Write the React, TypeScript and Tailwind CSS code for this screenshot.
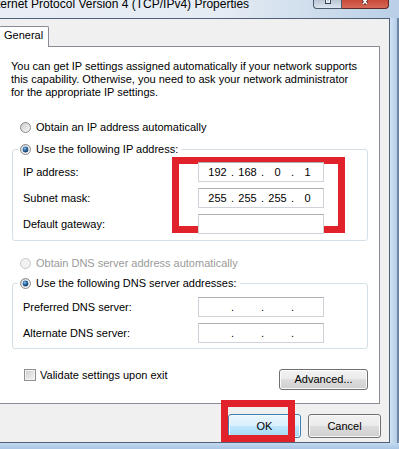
import React from "react";

function Radio({ checked = false, disabled = false }: { checked?: boolean; disabled?: boolean }) {
  return (
    <svg width="11" height="11" viewBox="0 0 11 11" className="block shrink-0">
      <defs>
        <linearGradient id="rbg" x1="0" y1="0" x2="1" y2="1">
          <stop offset="0" stopColor="#c9c9c9" />
          <stop offset="1" stopColor="#fbfbfb" />
        </linearGradient>
        <radialGradient id="rdot" cx="0.4" cy="0.35" r="0.75">
          <stop offset="0" stopColor="#8cc4ec" />
          <stop offset="0.45" stopColor="#2a66a0" />
          <stop offset="1" stopColor="#0f2f55" />
        </radialGradient>
      </defs>
      <circle
        cx="5.5"
        cy="5.5"
        r="5"
        fill={disabled ? "#f2f2f2" : "url(#rbg)"}
        stroke={disabled ? "#c6c6c6" : "#8a8a8a"}
      />
      {checked && <circle cx="5.5" cy="5.5" r="3.6" fill="#ffffff" />}
      {checked && <circle cx="5.5" cy="5.5" r="2.9" fill="url(#rdot)" />}
    </svg>
  );
}

function IpInput({ parts, blank = false }: { parts?: string[]; blank?: boolean }) {
  const p = parts ?? ["", "", "", ""];
  return (
    <div className="relative z-20 flex h-[20px] w-[126px] items-center border border-[#cfd2d8] border-t-[#abadb3] bg-white pl-[5px]">
      {!blank &&
        p.map((v, i) => (
          <React.Fragment key={i}>
            {i > 0 && <span className="w-[3px] text-center">.</span>}
            <span className="w-[27px] text-center">{v}</span>
          </React.Fragment>
        ))}
    </div>
  );
}

function Row({ label, parts, blank }: { label: string; parts?: string[]; blank?: boolean }) {
  return (
    <div className="flex h-[20px] items-center">
      <div className="w-[185px] whitespace-nowrap pl-[10px]">{label}</div>
      <IpInput parts={parts} blank={blank} />
    </div>
  );
}

function WinButton({ children, primary = false, className = "" }: { children: React.ReactNode; primary?: boolean; className?: string }) {
  const look = primary
    ? "border-[#3c7fb1] bg-[linear-gradient(#eaf6fd_0%,#d9f0fc_49%,#bee6fd_50%,#a7d9f5_100%)] shadow-[inset_0_0_0_1px_#f6fbfe]"
    : "border-[#707070] bg-[linear-gradient(#f2f2f2_0%,#ebebeb_49%,#dddddd_50%,#cfcfcf_100%)] shadow-[inset_0_0_0_1px_#fbfbfb]";
  return (
    <div className={`flex items-center justify-center rounded-[3px] border ${look} ${className}`}>
      {children}
    </div>
  );
}

export default function App() {
  return (
    <div className="relative flex h-[449px] w-[399px] flex-col overflow-hidden bg-[#bcd4ee] font-['Liberation_Sans',Arial,sans-serif] text-[11px] leading-[13px] text-black">
      {/* title bar */}
      <div className="flex h-[18px] shrink-0 items-start bg-[linear-gradient(90deg,#e9eef5_0%,#e5ecf4_55%,#cddcec_80%,#b9cfe7_100%)]">
        <div className="-ml-[3px] -mt-[3px] whitespace-nowrap text-[12px] leading-[15px]">
          ternet Protocol Version 4 (TCP/IPv4) Properties
        </div>
        <div className="ml-auto mr-[10px] flex h-[9px]">
          <div className="flex w-[29px] justify-center rounded-bl-[4px] border border-t-0 border-[#4b586a] bg-[linear-gradient(#b9c6d5,#dde5ee)]">
            <svg width="8" height="5" viewBox="0 0 8 5" className="ml-[1px]">
              <rect x="1.5" y="-2" width="5" height="5.5" fill="none" stroke="#3b4654" strokeWidth="1" />
              <rect x="2.5" y="-2" width="3" height="4" fill="none" stroke="#ffffff" strokeWidth="1" />
            </svg>
          </div>
          <div className="flex w-[47px] justify-center rounded-br-[4px] border border-l-0 border-t-0 border-[#5a2b26] bg-[linear-gradient(#c9493a,#d66a58)]">
            <svg width="10" height="5" viewBox="0 0 10 5">
              <path d="M1 -3 L7 4 M9 -3 L3 4" stroke="#4a1a14" strokeWidth="3" />
              <path d="M1 -3 L7 4 M9 -3 L3 4" stroke="#ffffff" strokeWidth="1.6" />
            </svg>
          </div>
        </div>
      </div>

      {/* client row */}
      <div className="flex h-[425px] shrink-0">
        <div className="flex h-full w-[390px] flex-col border-b border-r border-t border-[#4f6178] bg-[#f0f0f0] pt-[7px]">
          <div className="-ml-px flex flex-col">
            <div className="relative z-10 -mb-px h-[21px] w-[50px] rounded-t-[2px] border border-b-0 border-[#898c95] bg-white pl-[4px] pt-[2px]">
              General
            </div>
            <div className="flex h-[358px] w-[381px] flex-col border border-[#898c95] bg-white">
              <p className="ml-[11px] mt-[13px] whitespace-nowrap">
                You can get IP settings assigned automatically if your network supports
                <br />
                this capability. Otherwise, you need to ask your network administrator
                <br />
                for the appropriate IP settings.
              </p>

              <div className="ml-[20px] mt-[22px] flex h-[13px] items-center gap-[5px] whitespace-nowrap">
                <Radio />
                <span>Obtain an IP address automatically</span>
              </div>

              <fieldset className="ml-[12px] mt-[9px] w-[356px] rounded-[3px] border border-[#d5dfe5] pb-[6px] pt-[6px]">
                <legend className="ml-[5px] px-[2px]">
                  <span className="flex h-[13px] items-center gap-[5px] whitespace-nowrap">
                    <Radio checked />
                    <span className="pr-[1px]">Use the following IP address:</span>
                  </span>
                </legend>
                <div className="flex flex-col gap-[6px]">
                  <Row label="IP address:" parts={["192", "168", "0", "1"]} />
                  <Row label="Subnet mask:" parts={["255", "255", "255", "0"]} />
                  <Row label="Default gateway:" blank />
                </div>
              </fieldset>

              <div className="ml-[20px] mt-[16px] flex h-[13px] items-center gap-[5px] whitespace-nowrap text-[#9a9a9a]">
                <Radio disabled />
                <span>Obtain DNS server address automatically</span>
              </div>

              <fieldset className="ml-[12px] mt-[7px] w-[356px] rounded-[3px] border border-[#d5dfe5] pb-[5px] pt-[7px]">
                <legend className="ml-[5px] px-[2px]">
                  <span className="flex h-[13px] items-center gap-[5px] whitespace-nowrap">
                    <Radio checked />
                    <span className="pr-[1px]">Use the following DNS server addresses:</span>
                  </span>
                </legend>
                <div className="flex flex-col gap-[6px]">
                  <Row label="Preferred DNS server:" />
                  <Row label="Alternate DNS server:" />
                </div>
              </fieldset>

              <div className="mt-[20px] flex items-start">
                <div className="ml-[24px] flex h-[12px] items-center gap-[4px] whitespace-nowrap">
                  <span className="block h-[12px] w-[12px] shrink-0 border border-[#8e8f8f] bg-[linear-gradient(135deg,#cbcbcb,#f7f7f7)] shadow-[inset_0_0_0_1px_#f3f3f3]" />
                  <span>Validate settings upon exit</span>
                </div>
                <WinButton className="ml-auto mr-[11px] h-[21px] w-[89px]">Advanced...</WinButton>
              </div>
            </div>
          </div>

          <div className="flex justify-end gap-[7px] pr-[8px] pt-[10px]">
            <WinButton primary className="h-[24px] w-[73px]">OK</WinButton>
            <WinButton className="h-[24px] w-[73px]">Cancel</WinButton>
          </div>
        </div>
        <div className="flex-1 border-r-2 border-[#6d86a3] bg-[linear-gradient(90deg,#d2e2f4,#b4cce7)]" />
      </div>
      <div className="flex-1 bg-[linear-gradient(#c3d9f0,#a9c5e5)]" />

      {/* red annotation boxes */}
      <div className="absolute left-[172px] top-[157px] z-10 h-[76px] w-[173px] border-[7px] border-[#e2222a]" />
      <div className="absolute left-[221px] top-[400px] z-30 h-[42px] w-[74px] border-[7px] border-[#e2222a]" />
    </div>
  );
}
